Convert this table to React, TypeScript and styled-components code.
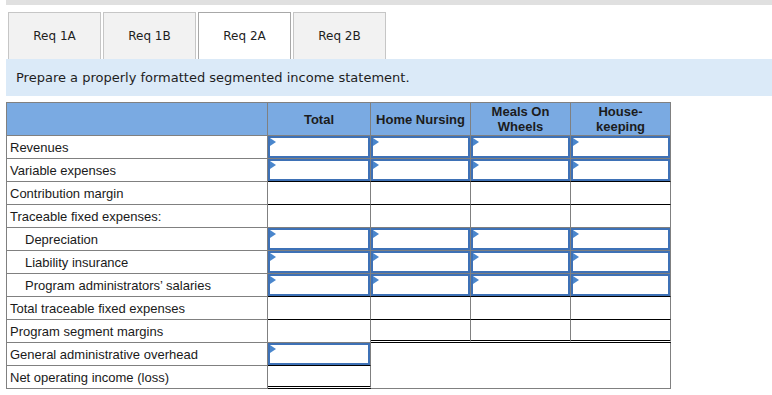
import React from 'react';
import styled, { createGlobalStyle } from 'styled-components';

type Rule = 'none' | 'single' | 'double';

interface Line {
  label: string;
  indent?: boolean;
  total: 'input' | 'blank';
  totalRule?: Rule;
  segments: 'input' | 'blank' | 'merged' | 'skip';
  segmentRule?: Rule;
}

const tabs = ['Req 1A', 'Req 1B', 'Req 2A', 'Req 2B'];
const activeTab = 'Req 2A';

const lines: Line[] = [
  { label: 'Revenues', total: 'input', segments: 'input' },
  { label: 'Variable expenses', total: 'input', totalRule: 'single', segments: 'input', segmentRule: 'single' },
  { label: 'Contribution margin', total: 'blank', totalRule: 'single', segments: 'blank', segmentRule: 'single' },
  { label: 'Traceable fixed expenses:', total: 'blank', segments: 'blank' },
  { label: 'Depreciation', indent: true, total: 'input', segments: 'input' },
  { label: 'Liability insurance', indent: true, total: 'input', segments: 'input' },
  {
    label: 'Program administrators’ salaries',
    indent: true,
    total: 'input',
    totalRule: 'single',
    segments: 'input',
    segmentRule: 'single',
  },
  { label: 'Total traceable fixed expenses', total: 'blank', totalRule: 'single', segments: 'blank', segmentRule: 'single' },
  { label: 'Program segment margins', total: 'blank', segments: 'blank', segmentRule: 'double' },
  { label: 'General administrative overhead', total: 'input', totalRule: 'single', segments: 'merged' },
  { label: 'Net operating income (loss)', total: 'blank', totalRule: 'double', segments: 'skip' },
];

const segments = ['Home Nursing', 'Meals On Wheels', 'House-keeping'];

const InputBox = ({ label }: { label: string }) => (
  <Field>
    <Entry aria-label={label} />
    <Marker />
  </Field>
);

const App = () => {
  return (
    <Page>
      <GlobalStyle />
      <TopStrip />
      <TabRow>
        {tabs.map((tab) => (
          <Tab key={tab} $active={tab === activeTab}>
            {tab}
          </Tab>
        ))}
      </TabRow>
      <Instruction>Prepare a properly formatted segmented income statement.</Instruction>

      <Statement>
        <colgroup>
          <col style={{ width: 261 }} />
          <col style={{ width: 103 }} />
          <col style={{ width: 100 }} />
          <col style={{ width: 100 }} />
          <col style={{ width: 100 }} />
        </colgroup>
        <thead>
          <tr>
            <HeadCell />
            <HeadCell>Total</HeadCell>
            <HeadCell>Home Nursing</HeadCell>
            <HeadCell>
              Meals On
              <br />
              Wheels
            </HeadCell>
            <HeadCell>
              House-
              <br />
              keeping
            </HeadCell>
          </tr>
        </thead>
        <tbody>
          {lines.map((line) => (
            <tr key={line.label}>
              <LabelCell $indent={line.indent}>{line.label}</LabelCell>
              <ValueCell $rule={line.totalRule}>
                {line.total === 'input' && <InputBox label={`${line.label} Total`} />}
              </ValueCell>
              {line.segments === 'merged' && <ValueCell colSpan={3} rowSpan={2} />}
              {(line.segments === 'input' || line.segments === 'blank') &&
                segments.map((seg) => (
                  <ValueCell key={seg} $rule={line.segmentRule}>
                    {line.segments === 'input' && <InputBox label={`${line.label} ${seg}`} />}
                  </ValueCell>
                ))}
            </tr>
          ))}
        </tbody>
      </Statement>
    </Page>
  );
};

export default App;

const GlobalStyle = createGlobalStyle`
  body {
    margin: 0;
    background: #ffffff;
  }
`;

const Page = styled.div`
  padding-left: 6px;
  width: 766px;
  height: 395px;
  overflow: hidden;
`;

const TopStrip = styled.div`
  height: 5px;
  background: #e0e0e0;
`;

const TabRow = styled.div`
  display: flex;
  gap: 2px;
  margin-top: 7px;
  padding-left: 2px;
`;

const Tab = styled.div<{ $active?: boolean }>`
  box-sizing: border-box;
  width: 93px;
  height: 47px;
  display: flex;
  align-items: center;
  justify-content: center;
  border: 1px solid ${(p) => (p.$active ? '#a8a8a8' : '#c6c6c6')};
  border-bottom: none;
  background: ${(p) => (p.$active ? '#ffffff' : '#f2f2f2')};
  font-family: 'DejaVu Sans', Verdana, sans-serif;
  font-size: 12px;
  color: #1e1e1e;
`;

const Instruction = styled.div`
  height: 37px;
  display: flex;
  align-items: center;
  padding-left: 10px;
  background: #dbeaf8;
  font-family: 'DejaVu Sans', Verdana, sans-serif;
  font-size: 13px;
  color: #1e1e1e;
`;

const Statement = styled.table`
  margin-top: 6px;
  width: 665px;
  table-layout: fixed;
  border-collapse: separate;
  border-spacing: 0;
  border-top: 1px solid #808080;
  border-left: 1px solid #808080;
  font-family: 'Liberation Sans', Arial, sans-serif;
  font-size: 13px;
  color: #1a1a1a;
`;

const HeadCell = styled.th`
  box-sizing: border-box;
  height: 33px;
  padding: 0 2px;
  background: #7aaae2;
  border-right: 1px solid #808080;
  border-bottom: 1px solid #808080;
  font-weight: bold;
  line-height: 15px;
  text-align: center;
  vertical-align: middle;
  color: #1c1c1c;
`;

const LabelCell = styled.td<{ $indent?: boolean }>`
  box-sizing: border-box;
  height: 23px;
  padding: 0 0 0 ${(p) => (p.$indent ? '18px' : '3px')};
  border-right: 1px solid #808080;
  border-bottom: 1px solid #808080;
  white-space: nowrap;
  vertical-align: middle;
`;

const ruleStyle = (rule?: Rule) => {
  if (rule === 'single') return '1px solid #000000';
  if (rule === 'double') return '3px double #000000';
  return '1px solid #808080';
};

const ValueCell = styled.td<{ $rule?: Rule }>`
  box-sizing: border-box;
  height: 23px;
  padding: 0;
  border-right: 1px solid #808080;
  border-bottom: ${(p) => ruleStyle(p.$rule)};
  vertical-align: top;
`;

const Field = styled.div`
  position: relative;
  height: 22px;
`;

const Entry = styled.input`
  box-sizing: border-box;
  display: block;
  width: 100%;
  height: 22px;
  margin: 0;
  padding: 0 4px;
  border: 2px solid #3e71b6;
  background: #ffffff;
  outline: none;
`;

const Marker = styled.span`
  position: absolute;
  top: 2px;
  left: 2px;
  width: 0;
  height: 0;
  border-top: 4px solid transparent;
  border-bottom: 4px solid transparent;
  border-left: 6px solid #4a86cc;
`;
